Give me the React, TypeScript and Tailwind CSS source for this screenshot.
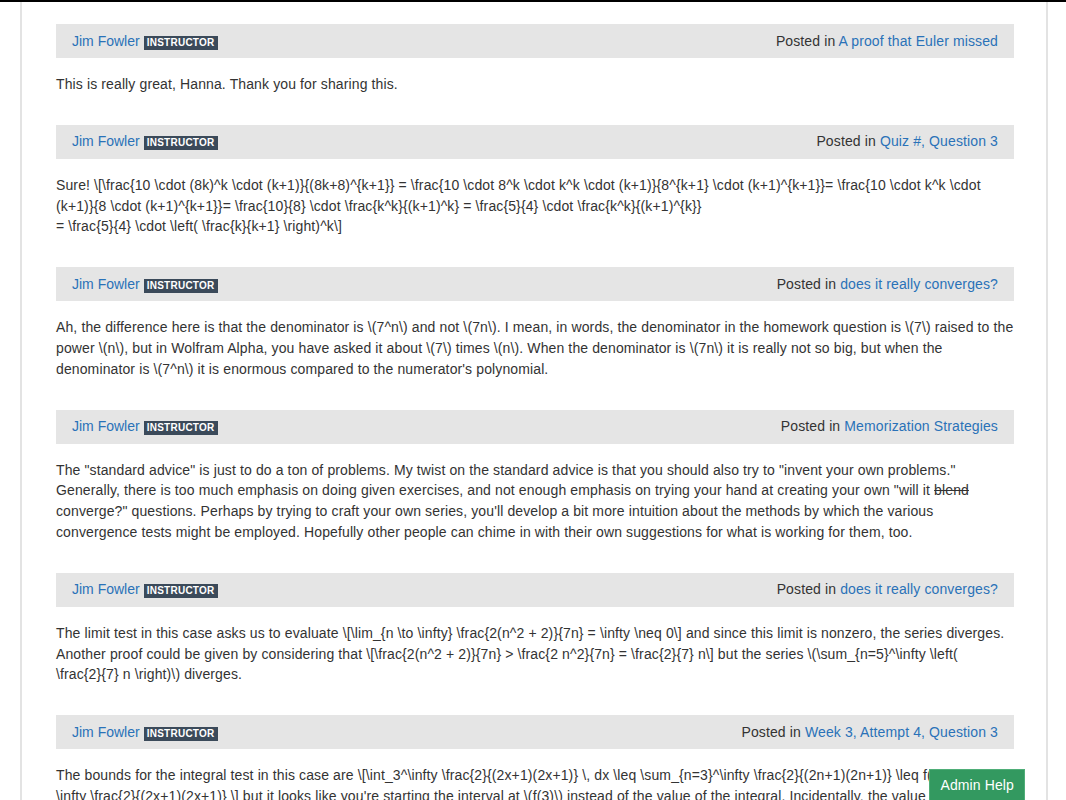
import React from "react";

type Post = { topic: React.ReactNode; body: React.ReactNode };

const Link = ({ children }: { children: React.ReactNode }) => (
  <a className="text-[#2a72b8] no-underline cursor-pointer">{children}</a>
);

const posts: Post[] = [
  {
    topic: <Link>A proof that Euler missed</Link>,
    body: <>This is really great, Hanna. Thank you for sharing this.</>,
  },
  {
    topic: <Link>Quiz #, Question 3</Link>,
    body: (
      <>
        {"Sure! \\[\\frac{10 \\cdot (8k)^k \\cdot (k+1)}{(8k+8)^{k+1}} = \\frac{10 \\cdot 8^k \\cdot k^k \\cdot (k+1)}{8^{k+1} \\cdot (k+1)^{k+1}}= \\frac{10 \\cdot k^k \\cdot (k+1)}{8 \\cdot (k+1)^{k+1}}= \\frac{10}{8} \\cdot \\frac{k^k}{(k+1)^k} = \\frac{5}{4} \\cdot \\frac{k^k}{(k+1)^{k}}"}
        <br />
        {"= \\frac{5}{4} \\cdot \\left( \\frac{k}{k+1} \\right)^k\\]"}
      </>
    ),
  },
  {
    topic: <Link>does it really converges?</Link>,
    body: (
      <>
        {"Ah, the difference here is that the denominator is \\(7^n\\) and not \\(7n\\). I mean, in words, the denominator in the homework question is \\(7\\) raised to the power \\(n\\), but in Wolfram Alpha, you have asked it about \\(7\\) times \\(n\\). When the denominator is \\(7n\\) it is really not so big, but when the denominator is \\(7^n\\) it is enormous compared to the numerator's polynomial."}
      </>
    ),
  },
  {
    topic: <Link>Memorization Strategies</Link>,
    body: (
      <>
        The "standard advice" is just to do a ton of problems. My twist on the standard advice is that you
        should also try to "invent your own problems." Generally, there is too much emphasis on doing given
        exercises, and not enough emphasis on trying your hand at creating your own "will it <s>blend</s>{" "}
        converge?" questions. Perhaps by trying to craft your own series, you'll develop a bit more intuition
        about the methods by which the various convergence tests might be employed. Hopefully other people can
        chime in with their own suggestions for what is working for them, too.
      </>
    ),
  },
  {
    topic: <Link>does it really converges?</Link>,
    body: (
      <>
        {"The limit test in this case asks us to evaluate \\[\\lim_{n \\to \\infty} \\frac{2(n^2 + 2)}{7n} = \\infty \\neq 0\\] and since this limit is nonzero, the series diverges. Another proof could be given by considering that \\[\\frac{2(n^2 + 2)}{7n} > \\frac{2 n^2}{7n} = \\frac{2}{7} n\\] but the series \\(\\sum_{n=5}^\\infty \\left("}
        <br />
        {"\\frac{2}{7} n \\right)\\) diverges."}
      </>
    ),
  },
  {
    topic: <Link>Week 3, Attempt 4, Question 3</Link>,
    body: (
      <>
        {"The bounds for the integral test in this case are \\[\\int_3^\\infty \\frac{2}{(2x+1)(2x+1)} \\, dx \\leq \\sum_{n=3}^\\infty \\frac{2}{(2n+1)(2n+1)} \\leq f(3) + \\int_3^"}
        <br />
        {"\\infty \\frac{2}{(2x+1)(2x+1)} \\] but it looks like you're starting the interval at \\(f(3)\\) instead of the value of the integral. Incidentally, the value of the sum is approximately 0.1 and so the bounds are reasonably tight."}
      </>
    ),
  },
];

export default function App() {
  return (
    <div
      className="h-screen overflow-hidden bg-white border-t-2 border-black text-[14px] text-[#333] tracking-[0.12px]"
      style={{ fontFamily: '"Liberation Sans", Arial, sans-serif' }}
    >
      <div className="ml-[20px] w-[1028px] h-full border-x-2 border-[#e3e3e3] pl-[34px] pr-[32px] pt-[22px]">
        {posts.map((p, i) => (
          <div key={i}>
            <div className="flex items-center justify-between h-[34px] bg-[#e5e5e5] pl-4 pr-4">
              <div className="flex items-center">
                <span className="tracking-normal">
                  <Link>Jim Fowler</Link>
                </span>
                <span className="ml-[4px] mt-[3px] bg-[#3b4a5a] text-white font-bold text-[10px] leading-[14px] px-[3px] tracking-[0.25px]">
                  INSTRUCTOR
                </span>
              </div>
              <div>
                Posted in {p.topic}
              </div>
            </div>
            <p className="mt-[16px] mb-[30px] leading-[20.8px]">{p.body}</p>
          </div>
        ))}
      </div>
      <div className="fixed bottom-0 right-[41px] h-[31px] px-[10px] bg-[#339960] border border-[#4fae78] border-b-0 text-white text-[14px] tracking-[0.12px] flex items-center">
        Admin Help
      </div>
    </div>
  );
}
